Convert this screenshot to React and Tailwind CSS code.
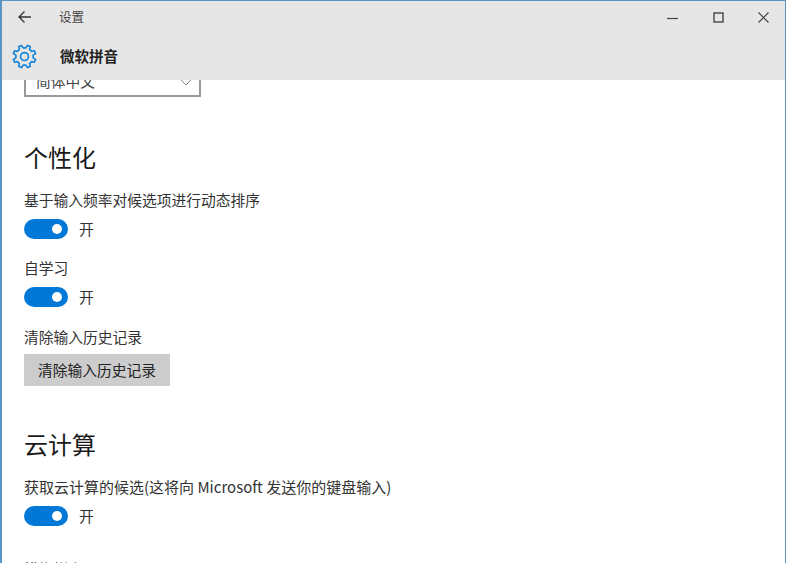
import React from 'react'

const font = '[font-family:"Noto_Sans_CJK_SC","Liberation_Sans",sans-serif]'

// 8 tooth gear outline, same shape as the Windows settings glyph
function gearPath() {
  const teeth = 8
  const outer = 11
  const inner = 8.4
  let d = ''
  for (let i = 0; i < teeth; i++) {
    const a = (i / teeth) * Math.PI * 2 + Math.PI / 8
    const step = (Math.PI * 2) / teeth
    const pt = (r, t) => `${(12 + r * Math.cos(t)).toFixed(2)} ${(12 + r * Math.sin(t)).toFixed(2)}`
    d += `${i === 0 ? 'M' : 'L'}${pt(inner, a - step * 0.3)} L${pt(outer, a - step * 0.17)} L${pt(outer, a + step * 0.17)} L${pt(inner, a + step * 0.3)} `
  }
  return d + 'Z'
}

function Gear() {
  return (
    <svg width="25" height="25" viewBox="0 0 24 24" fill="none" stroke="#1a86d9" strokeWidth="1.6" strokeLinejoin="round">
      <path d={gearPath()} />
      <circle cx="12" cy="12" r="3.8" />
    </svg>
  )
}

function Toggle() {
  return (
    <div className="flex items-center h-5 mt-[9px]">
      <div className="w-11 h-5 rounded-full bg-[#0078d7] flex items-center justify-end pr-[6px]">
        <div className="w-[10px] h-[10px] rounded-full bg-white" />
      </div>
      <span className="ml-[11px] text-[15px] text-[#333]">开</span>
    </div>
  )
}

function Label({ children, className = '' }) {
  return <div className={`text-[14.75px] leading-5 text-[#333] ${className}`}>{children}</div>
}

function Heading({ children, className = '' }) {
  return <h2 className={`text-[24px] leading-8 text-[#1a1a1a] font-normal ${className}`}>{children}</h2>
}

export default function App() {
  return (
    <div className={`w-[786px] h-[563px] overflow-hidden flex flex-col bg-white border-l-2 border-r border-t border-[#5b93c4] ${font}`}>
      {/* Title bar */}
      <div className="h-[79px] shrink-0 bg-[#e6e6e6] z-10 relative">
        <div className="h-8 flex items-center">
          <svg className="ml-[15px]" width="15" height="14" viewBox="0 0 15 14" fill="none" stroke="#333" strokeWidth="1.3">
            <path d="M14 7H2M7.5 1.5 2 7l5.5 5.5" />
          </svg>
          <span className="ml-[27px] text-[12.5px] text-[#444]">设置</span>
          <div className="ml-auto flex items-center">
            <svg width="11" height="12" viewBox="0 0 11 12" stroke="#444" strokeWidth="1.2"><path d="M0 7.5h11" /></svg>
            <svg className="ml-[35px]" width="11" height="11" viewBox="0 0 11 11" fill="none" stroke="#444" strokeWidth="1.4"><rect x="1" y="1" width="9" height="9" /></svg>
            <svg className="ml-[34px] mr-[16px]" width="11" height="11" viewBox="0 0 11 11" stroke="#444" strokeWidth="1.2"><path d="M.5.5l10 10M10.5.5l-10 10" /></svg>
          </div>
        </div>
        <div className="flex items-center h-[46px]">
          <div className="ml-[10px]"><Gear /></div>
          <span className="ml-[23px] text-[14.5px] font-bold text-[#222]">微软拼音</span>
        </div>
      </div>

      {/* Settings content, scrolled so the dropdown sits under the title bar */}
      <div className="pl-[22px]">
        <div className="-mt-[17px] w-[177px] h-[34px] border-2 border-[#999] flex items-center justify-between pt-[2px] pl-[10px] pr-[6px]">
          <span className="text-[14.75px] text-[#444]">简体中文</span>
          <svg className="mt-[2px]" width="14" height="8" viewBox="0 0 14 8" fill="none" stroke="#888" strokeWidth="1"><path d="M1 1l6 6 6-6" /></svg>
        </div>

        <Heading className="mt-[44px]">个性化</Heading>
        <Label className="mt-[17px]">基于输入频率对候选项进行动态排序</Label>
        <Toggle />
        <Label className="mt-[19px]">自学习</Label>
        <Toggle />
        <Label className="mt-[20px]">清除输入历史记录</Label>
        <button className="mt-[7px] w-[146px] h-8 bg-[#cccccc] text-[14.75px] text-[#222] block">清除输入历史记录</button>

        <Heading className="mt-[42px]">云计算</Heading>
        <Label className="mt-[17px] text-[15px]">获取云计算的候选(这将向 Microsoft 发送你的键盘输入)</Label>
        <Toggle />
        <Label className="mt-[33px]">模糊拼音设置</Label>
      </div>
    </div>
  )
}
